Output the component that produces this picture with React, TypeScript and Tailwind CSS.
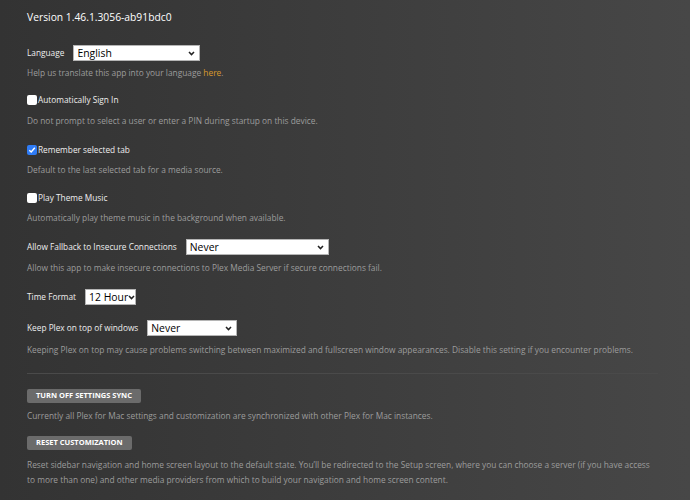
import React from "react";

const font = { fontFamily: '"Open Sans", "Liberation Sans", sans-serif' };

function Chevron() {
  return (
    <svg width="7" height="5" viewBox="0 0 7 5" className="shrink-0">
      <path d="M1 1 L3.5 3.6 L6 1" fill="none" stroke="#222" strokeWidth="1.5" />
    </svg>
  );
}

function Select({ value, width }: { value: string; width: string }) {
  return (
    <div
      className={`flex h-4 items-center justify-between border border-[#b5b5b5] bg-white pl-[3px] pr-[4px] text-[10.4px] leading-none text-black ${width}`}
    >
      <span className="whitespace-nowrap">{value}</span>
      <Chevron />
    </div>
  );
}

function Checkbox({ checked }: { checked?: boolean }) {
  if (checked) {
    return (
      <div className="flex h-[10px] w-[10px] items-center justify-center rounded-[2px] bg-[#2f7cf6]">
        <svg width="8" height="8" viewBox="0 0 8 8">
          <path d="M1.3 4.2 L3.2 6 L6.8 1.8" fill="none" stroke="white" strokeWidth="1.4" />
        </svg>
      </div>
    );
  }
  return <div className="h-[10px] w-[10px] rounded-[2px] bg-white" />;
}

function Desc({ children, className = "" }: { children: React.ReactNode; className?: string }) {
  return <p className={`text-[8.35px] leading-[14px] text-[#9c9c9c] ${className}`}>{children}</p>;
}

function Button({ children, className = "" }: { children: React.ReactNode; className?: string }) {
  return (
    <div
      className={`flex h-[14px] w-fit items-center rounded-[2px] bg-[#6b6b6b] px-[9px] text-[7.5px] font-bold uppercase leading-none text-white ${className}`}
    >
      {children}
    </div>
  );
}

function Row({ children, className = "" }: { children: React.ReactNode; className?: string }) {
  return <div className={`flex h-4 items-center gap-[9px] text-[8.3px] ${className}`}>{children}</div>;
}

function Check({ label, checked, className = "" }: { label: string; checked?: boolean; className?: string }) {
  return (
    <div className={`flex h-[14px] items-center gap-[1px] text-[8.3px] ${className}`}>
      <Checkbox checked={checked} />
      <span>{label}</span>
    </div>
  );
}

export default function App() {
  return (
    <div
      style={font}
      className="flex h-[500px] w-[690px] flex-col overflow-hidden bg-gradient-to-r from-[#333333] to-[#474747] px-[27px] pt-[8px] text-[#eeeeee]"
    >
      <h1 className="text-[10.3px] leading-[18px] text-white">Version 1.46.1.3056-ab91bdc0</h1>

      <Row className="mt-[19px]">
        <span>Language</span>
        <Select value="English" width="w-[127px]" />
      </Row>
      <Desc className="mt-[5px]">
        Help us translate this app into your language <span className="text-[#d99a2b]">here</span>.
      </Desc>

      <Check className="mt-[13px]" label="Automatically Sign In" />
      <Desc className="mt-[7px]">Do not prompt to select a user or enter a PIN during startup on this device.</Desc>

      <Check className="mt-[15px]" label="Remember selected tab" checked />
      <Desc className="mt-[6px]">Default to the last selected tab for a media source.</Desc>

      <Check className="mt-[14px]" label="Play Theme Music" />
      <Desc className="mt-[6px]">Automatically play theme music in the background when available.</Desc>

      <Row className="mt-[14px]">
        <span>Allow Fallback to Insecure Connections</span>
        <Select value="Never" width="w-[143px]" />
      </Row>
      <Desc className="mt-[6px]">
        Allow this app to make insecure connections to Plex Media Server if secure connections fail.
      </Desc>

      <Row className="mt-[14px]">
        <span>Time Format</span>
        <Select value="12 Hour" width="w-[51px]" />
      </Row>

      <Row className="mt-[15px]">
        <span>Keep Plex on top of windows</span>
        <Select value="Never" width="w-[90px]" />
      </Row>
      <Desc className="mt-[7px] whitespace-nowrap">
        Keeping Plex on top may cause problems switching between maximized and fullscreen window appearances. Disable
        this setting if you encounter problems.
      </Desc>

      <div className="mt-[16px] h-px w-[631px] bg-[#4a4a4a]" />

      <Button className="mt-[15px]">Turn off settings sync</Button>
      <Desc className="mt-[6px]">
        Currently all Plex for Mac settings and customization are synchronized with other Plex for Mac instances.
      </Desc>

      <Button className="mt-[13px]">Reset customization</Button>
      <p className="mt-[7px] text-[8.35px] leading-[15px] text-[#9c9c9c]">
        Reset sidebar navigation and home screen layout to the default state. You’ll be redirected to the Setup screen,
        where you can choose a server (if you have access
        <br />
        to more than one) and other media providers from which to build your navigation and home screen content.
      </p>
    </div>
  );
}
